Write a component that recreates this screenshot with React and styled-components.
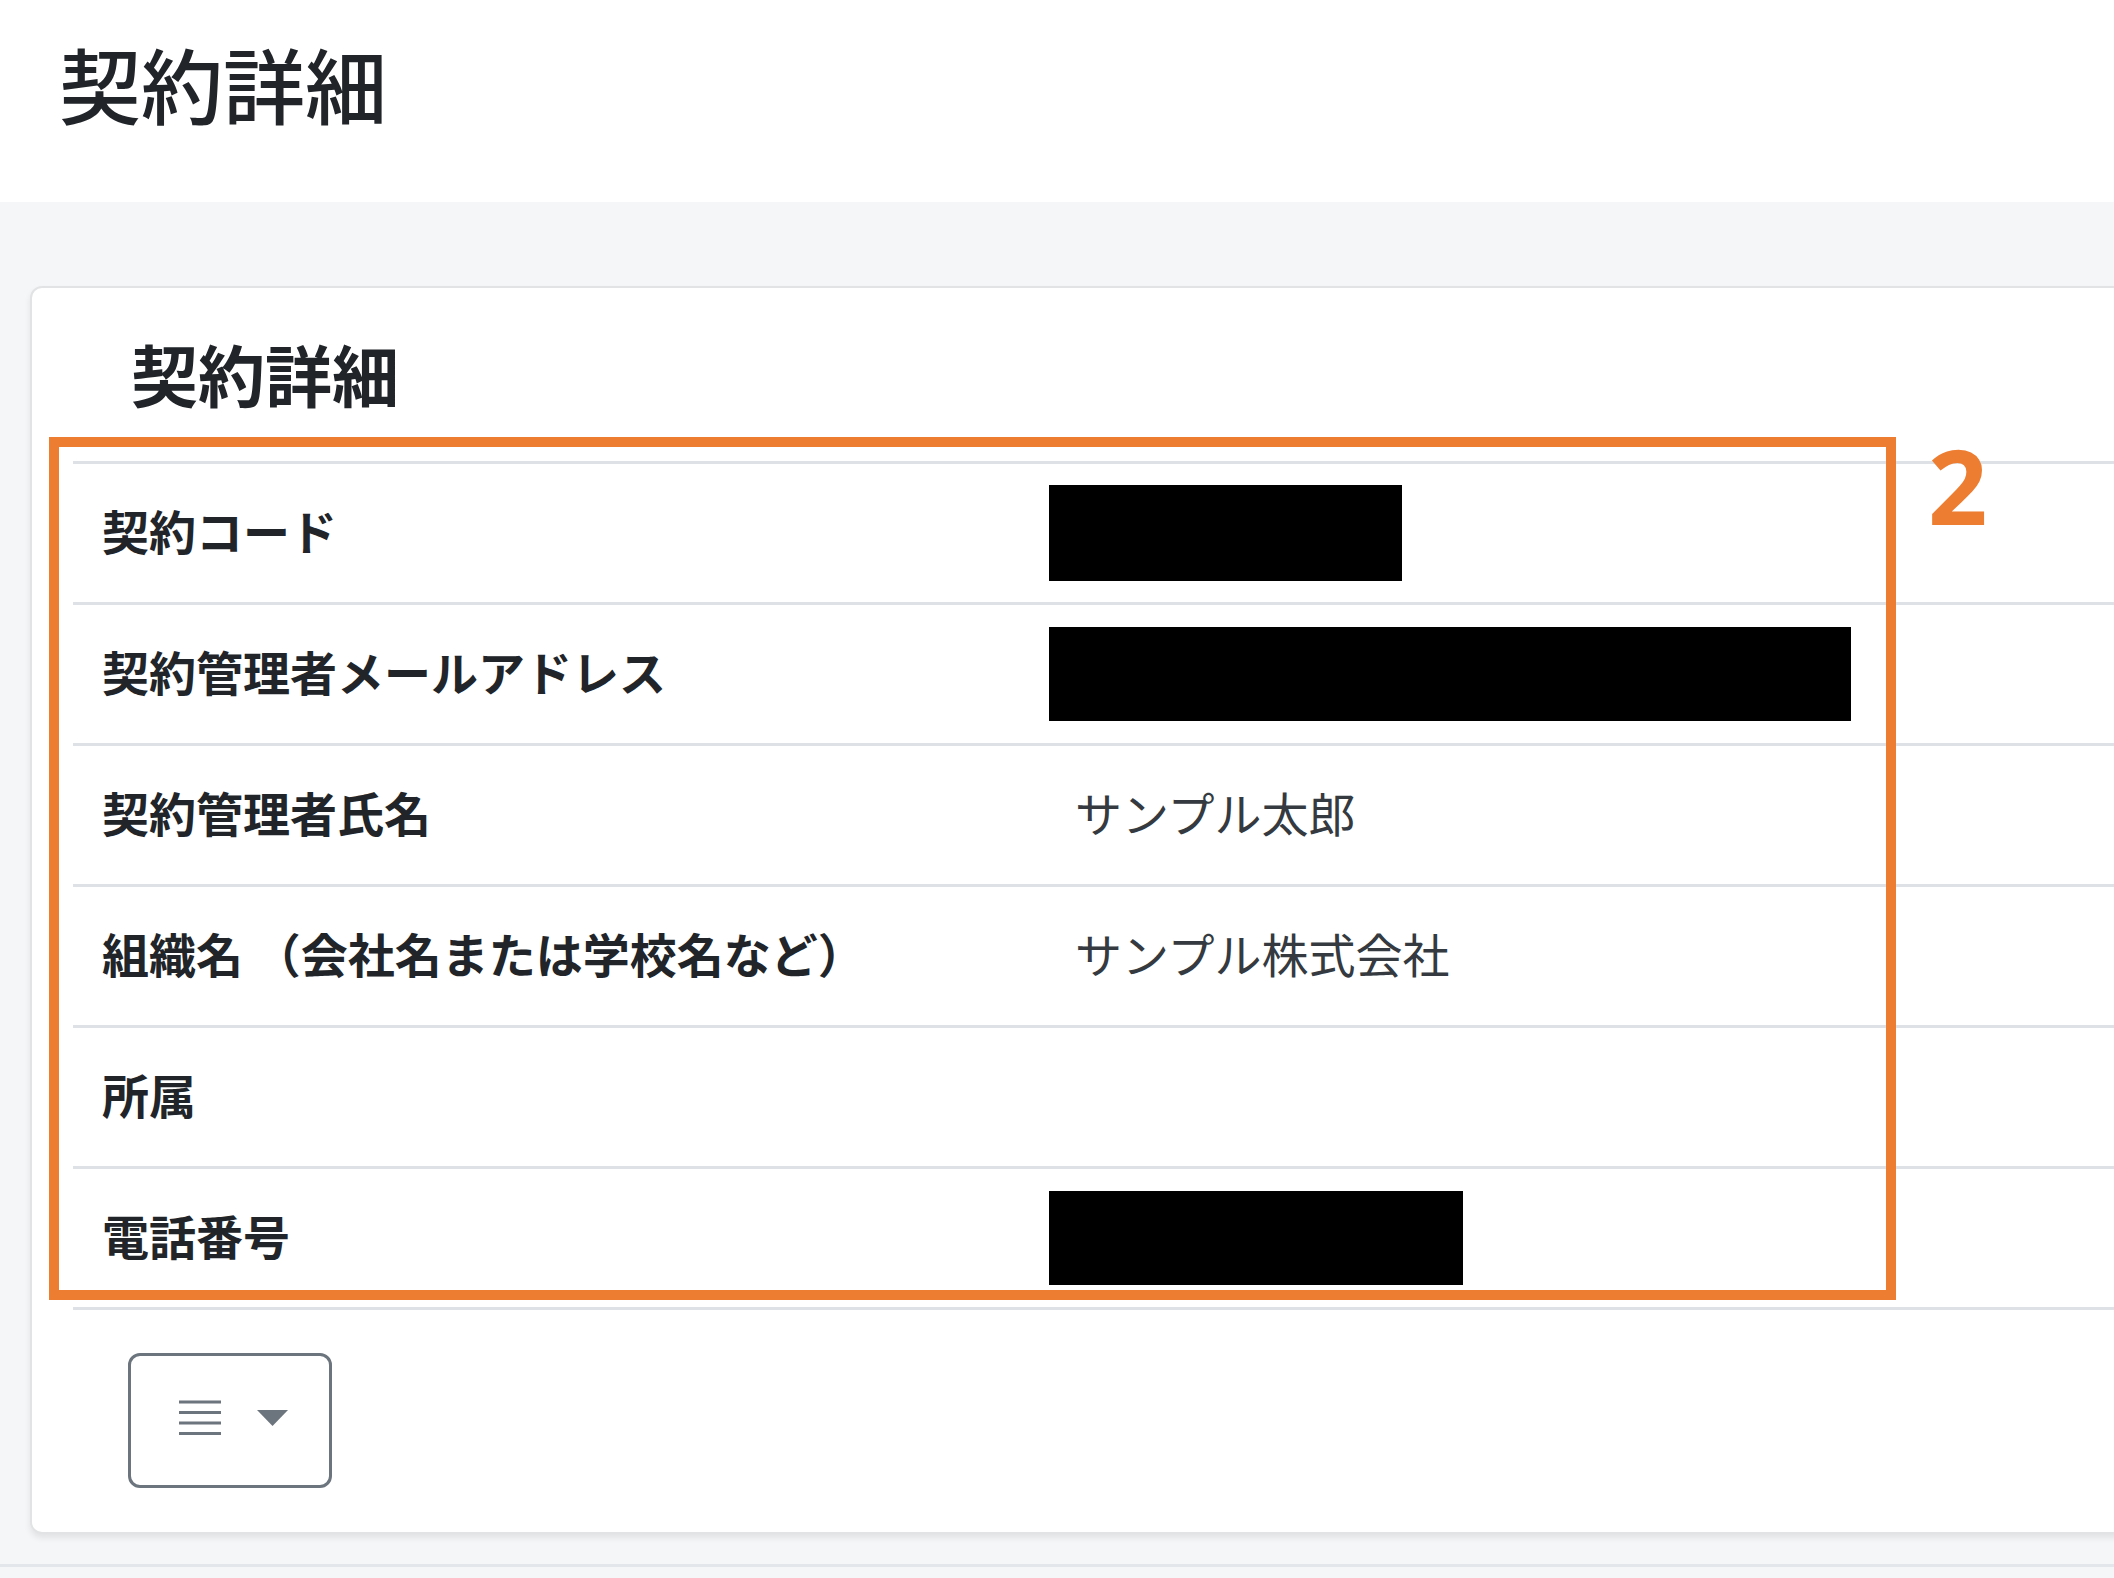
import React from 'react'
import styled, { createGlobalStyle } from 'styled-components'

const GlobalStyle = createGlobalStyle`
  html, body {
    margin: 0;
    padding: 0;
    background: #f5f6f8;
    overflow: hidden;
  }
  body {
    font-family: "Noto Sans CJK JP", "Noto Sans", sans-serif;
    color: #212529;
  }
  * { box-sizing: border-box; }
`

const rows = [
  { label: '契約コード', redact: 353, h: 96 },
  { label: '契約管理者メールアドレス', redact: 802, h: 94 },
  { label: '契約管理者氏名', value: 'サンプル太郎' },
  { label: '組織名 （会社名または学校名など）', value: 'サンプル株式会社' },
  { label: '所属', value: '' },
  { label: '電話番号', redact: 414, h: 94 },
]

function App() {
  return (
    <Page>
      <GlobalStyle />
      <Header>
        <PageTitle>契約詳細</PageTitle>
      </Header>
      <Content>
        <Card>
          <CardTitle>契約詳細</CardTitle>
          <DetailTable>
            {rows.map(r => (
              <Row key={r.label}>
                <Label>{r.label}</Label>
                <Value $text={!r.redact}>
                  {r.redact ? <Redacted $w={r.redact} $h={r.h} /> : r.value}
                </Value>
              </Row>
            ))}
          </DetailTable>
          <MenuButton>
            <svg width="42" height="36" viewBox="0 0 42 36">
              <g stroke="#6c757d" strokeWidth="3">
                <line x1="0" y1="2" x2="42" y2="2" />
                <line x1="0" y1="12.5" x2="42" y2="12.5" />
                <line x1="0" y1="23" x2="42" y2="23" />
                <line x1="0" y1="33.5" x2="42" y2="33.5" />
              </g>
            </svg>
            <svg width="31" height="16" viewBox="0 0 31 16">
              <path d="M0 0 L31 0 L15.5 16 Z" fill="#6c757d" />
            </svg>
          </MenuButton>
          <Highlight />
          <Marker>2</Marker>
        </Card>
      </Content>
      <Footer />
    </Page>
  )
}

const Page = styled.div`
  width: 2114px;
  height: 1578px;
  display: flex;
  flex-direction: column;
  overflow: hidden;
`

const Header = styled.header`
  height: 202px;
  flex-shrink: 0;
  background: #ffffff;
  padding: 35px 0 0 59px;
`

const PageTitle = styled.h1`
  margin: 0;
  font-size: 82px;
  line-height: 96px;
  font-weight: 500;
  color: #212529;
`

const Content = styled.main`
  flex: 1;
  padding: 84px 0 0 30px;
`

const Card = styled.section`
  position: relative;
  width: calc(100% + 40px);
  background: #ffffff;
  border: 2px solid #e2e3e5;
  border-radius: 12px;
  box-shadow: 0 4px 6px rgba(0, 0, 0, 0.08);
  padding: 45px 0 44px 41px;
`

const CardTitle = styled.h2`
  margin: 0 0 48px 58px;
  font-size: 67px;
  line-height: 80px;
  font-weight: 700;
  color: #212529;
`

const DetailTable = styled.div`
  border-top: 3px solid #dee2e6;
`

const Row = styled.div`
  display: grid;
  grid-template-columns: 973px 1fr;
  align-items: center;
  height: 141px;
  border-bottom: 3px solid #dee2e6;
`

const Label = styled.div`
  padding: 0 29px 8px;
  font-size: 47px;
  font-weight: 700;
  color: #212529;
  white-space: pre;
`

const Value = styled.div`
  padding: 0 29px ${p => (p.$text ? '8px' : '0')};
  font-size: 47px;
  font-weight: 400;
  color: #343a40;
  white-space: nowrap;
`

const Redacted = styled.span`
  display: block;
  margin-left: -26px;
  width: ${p => p.$w}px;
  height: ${p => p.$h}px;
  background: #000000;
`

const MenuButton = styled.button`
  margin: 43px 0 0 55px;
  width: 204px;
  height: 135px;
  background: #ffffff;
  border: 3px solid #6c757d;
  border-radius: 12px;
  display: flex;
  align-items: center;
  justify-content: center;
  gap: 36px;
  padding: 0 0 6px 6px;
`

const Highlight = styled.div`
  position: absolute;
  left: 17px;
  top: 149px;
  width: 1847px;
  height: 863px;
  border: 10px solid #ed7d31;
  pointer-events: none;
`

const Marker = styled.div`
  position: absolute;
  left: 1896px;
  top: 147px;
  font-family: "Open Sans", "Liberation Sans", sans-serif;
  font-size: 104px;
  line-height: 100px;
  font-weight: 700;
  color: #ed7d31;
`

const Footer = styled.footer`
  height: 14px;
  flex-shrink: 0;
  border-top: 3px solid #e3e6ea;
  background: #f5f6f8;
`

export default App
